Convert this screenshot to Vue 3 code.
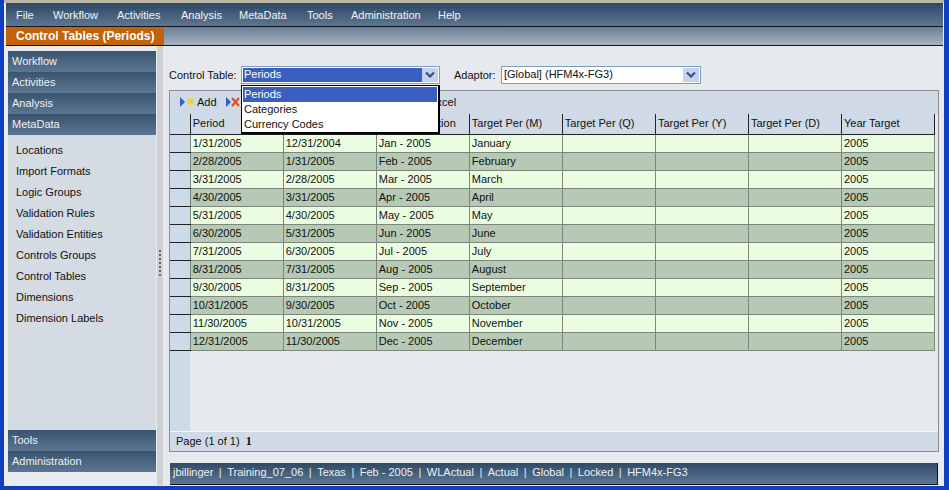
<template>
  <div class="window">
    <nav class="menubar">
      <span v-for="m in menus" :key="m.label" class="menu-item" :style="{ width: m.width + 'px' }">{{ m.label }}</span>
    </nav>
    <div class="titlebar">
      <div class="title-tab">Control Tables (Periods)</div>
    </div>

    <div class="body">
      <aside class="sidebar">
        <div class="side-head" v-for="h in topHeads" :key="h">{{ h }}</div>
        <ul class="side-list">
          <li v-for="l in links" :key="l">{{ l }}</li>
        </ul>
        <div class="side-head" v-for="h in bottomHeads" :key="h">{{ h }}</div>
      </aside>

      <div class="splitter"><span class="grip"></span></div>

      <main class="content">
        <div class="filters">
          <label class="lbl">Control Table:</label>
          <div class="combo combo-open">
            <span class="combo-text">Periods</span>
            <span class="combo-btn">
              <svg width="10" height="8" viewBox="0 0 10 8"><path d="M1 1.5 L5 5.5 L9 1.5" fill="none" stroke="#3c4f7c" stroke-width="2.2"/></svg>
            </span>
            <ul class="dropdown">
              <li class="sel">Periods</li>
              <li>Categories</li>
              <li>Currency Codes</li>
            </ul>
          </div>
          <label class="lbl lbl-adaptor">Adaptor:</label>
          <div class="combo combo-wide">
            <span class="combo-text plain">[Global] (HFM4x-FG3)</span>
            <span class="combo-btn">
              <svg width="10" height="8" viewBox="0 0 10 8"><path d="M1 1.5 L5 5.5 L9 1.5" fill="none" stroke="#3c4f7c" stroke-width="2.2"/></svg>
            </span>
          </div>
        </div>

        <section class="grid">
          <div class="toolbar">
            <span class="tool">
              <svg width="16" height="12" viewBox="0 0 16 12">
                <path d="M1 1 L6 6 L1 11 Z" fill="#2f5fd0"/>
                <path d="M11.5 1.5 V9.5 M7.5 5.5 H15.5 M8.7 2.7 L14.3 8.3 M14.3 2.7 L8.7 8.3" stroke="#e6d63c" stroke-width="1.6"/>
              </svg>
              Add
            </span>
            <span class="tool tool-del">
              <svg width="16" height="12" viewBox="0 0 16 12">
                <path d="M1 1 L6 6 L1 11 Z" fill="#2f5fd0"/>
                <path d="M7 2 L14 10 M14 2 L7 10" stroke="#e0502a" stroke-width="2.2"/>
              </svg>
            </span>
            <span class="tool tool-excel">xcel</span>
          </div>

          <table class="tbl">
            <thead>
              <tr>
                <th class="rowhead"></th>
                <th v-for="(c, i) in columns" :key="i">{{ c }}</th>
              </tr>
            </thead>
            <tbody>
              <tr v-for="(r, i) in rows" :key="r.period" :class="i % 2 ? 'dark' : 'light'">
                <td class="rowhead"></td>
                <td>{{ r.period }}</td>
                <td>{{ r.prior }}</td>
                <td>{{ r.desc }}</td>
                <td>{{ r.month }}</td>
                <td></td>
                <td></td>
                <td></td>
                <td>2005</td>
              </tr>
            </tbody>
          </table>

          <div class="grid-space"><span class="rowhead-fill"></span></div>
          <div class="pager">Page (1 of 1)&nbsp; <b>1</b></div>
        </section>

        <footer class="status">
          <template v-for="(s, i) in statusItems" :key="s">
            <span v-if="i" class="sep">|</span>
            <span>{{ s }}</span>
          </template>
        </footer>
      </main>
    </div>
  </div>
</template>

<script setup>
const menus = [
  { label: 'File', width: 37 },
  { label: 'Workflow', width: 64 },
  { label: 'Activities', width: 64 },
  { label: 'Analysis', width: 58 },
  { label: 'MetaData', width: 68 },
  { label: 'Tools', width: 44 },
  { label: 'Administration', width: 87 },
  { label: 'Help', width: 40 }
]

const topHeads = ['Workflow', 'Activities', 'Analysis', 'MetaData']
const bottomHeads = ['Tools', 'Administration']
const links = [
  'Locations', 'Import Formats', 'Logic Groups', 'Validation Rules', 'Validation Entities',
  'Controls Groups', 'Control Tables', 'Dimensions', 'Dimension Labels'
]

// the second header and most of the third sit under the open dropdown
const columns = [
  'Period', '', 'tion', 'Target Per (M)',
  'Target Per (Q)', 'Target Per (Y)', 'Target Per (D)', 'Year Target'
]

const rows = [
  ['1/31/2005', '12/31/2004', 'Jan - 2005', 'January'],
  ['2/28/2005', '1/31/2005', 'Feb - 2005', 'February'],
  ['3/31/2005', '2/28/2005', 'Mar - 2005', 'March'],
  ['4/30/2005', '3/31/2005', 'Apr - 2005', 'April'],
  ['5/31/2005', '4/30/2005', 'May - 2005', 'May'],
  ['6/30/2005', '5/31/2005', 'Jun - 2005', 'June'],
  ['7/31/2005', '6/30/2005', 'Jul - 2005', 'July'],
  ['8/31/2005', '7/31/2005', 'Aug - 2005', 'August'],
  ['9/30/2005', '8/31/2005', 'Sep - 2005', 'September'],
  ['10/31/2005', '9/30/2005', 'Oct - 2005', 'October'],
  ['11/30/2005', '10/31/2005', 'Nov - 2005', 'November'],
  ['12/31/2005', '11/30/2005', 'Dec - 2005', 'December']
].map(([period, prior, desc, month]) => ({ period, prior, desc, month }))

const statusItems = ['jbillinger', 'Training_07_06', 'Texas', 'Feb - 2005', 'WLActual', 'Actual', 'Global', 'Locked', 'HFM4x-FG3']
</script>

<style>
html, body {
  margin: 0;
  overflow: hidden;
}
</style>

<style scoped>
.window {
  width: 949px;
  height: 490px;
  box-sizing: border-box;
  padding: 3px 5px 5px 6px;
  background: #e9ecef;
  font-family: "Liberation Sans", Arial, sans-serif;
  font-size: 11px;
  color: #111;
  display: flex;
  flex-direction: column;
  box-shadow: inset 4px 0 0 #0f3ec0, inset -5px 0 0 #0f3ec0, inset 0 -4px 0 #0f3ec0, inset 0 3px 0 #bdb8a4;
}

.menubar {
  height: 23px;
  margin-right: 1px;
  padding-left: 10px;
  display: flex;
  align-items: center;
  background: linear-gradient(#2c4663, #5d7793);
  color: #f2f4f6;
  font-size: 11px;
  flex: none;
}

.titlebar {
  height: 18px;
  margin-right: 1px;
  border-top: 1px solid #10161d;
  border-bottom: 1px solid #10161d;
  background: linear-gradient(#6c7f96, #a6b1c1);
  flex: none;
  display: flex;
}

.title-tab {
  width: 158px;
  background: #c2620a;
  color: #fff;
  font-weight: bold;
  font-size: 12px;
  line-height: 18px;
  padding-left: 10px;
  box-sizing: border-box;
}

.body {
  flex: 1;
  display: flex;
  min-height: 0;
}

.sidebar {
  width: 148px;
  margin: 5px 0 0 2px;
  height: 421px;
  flex: none;
  display: flex;
  flex-direction: column;
}

.side-head {
  height: 21px;
  line-height: 21px;
  padding-left: 4px;
  color: #eef1f4;
  background: linear-gradient(#3a536e, #5c7590);
  flex: none;
}

.side-list {
  flex: 1;
  margin: 0;
  padding: 5px 0 0 8px;
  list-style: none;
  background: #d4dbe2;
}

.side-list li {
  height: 21px;
  line-height: 21px;
}

.splitter {
  width: 6px;
  margin-left: 1px;
  background: #cfd0d0;
  flex: none;
  display: flex;
  align-items: center;
  justify-content: center;
  padding-bottom: 3px;
}

.grip {
  width: 2px;
  height: 28px;
  background: repeating-linear-gradient(#666 0 2px, transparent 2px 4px);
}

.content {
  flex: 1;
  min-width: 0;
  padding: 20px 0 0 6px;
  display: flex;
  flex-direction: column;
  background: #e6e9ed;
}

.filters {
  display: flex;
  align-items: center;
  height: 18px;
  flex: none;
}

.lbl {
  width: 72px;
  padding-bottom: 1px;
  flex: none;
}

.lbl-adaptor {
  width: 47px;
  margin-left: 14px;
}

.combo {
  position: relative;
  width: 199px;
  height: 18px;
  box-sizing: border-box;
  border: 1px solid #7f9db9;
  background: #fff;
  display: flex;
  padding: 1px;
}

.combo-wide {
  width: 200px;
}

.combo-text {
  flex: 1;
  line-height: 13px;
  padding-left: 1px;
  color: #fff;
  background: #3a5fc0;
}

.combo-text.plain {
  color: #111;
  background: #fff;
}

.combo-btn {
  width: 16px;
  background: #c4d2ef;
  display: flex;
  align-items: center;
  justify-content: center;
}

.dropdown {
  position: absolute;
  left: -1px;
  top: 18px;
  width: 199px;
  height: 49px;
  box-sizing: border-box;
  margin: 0;
  padding: 1px;
  list-style: none;
  background: #fff;
  border: 1px solid #000;
  border-right-width: 2px;
  border-bottom-width: 2px;
  z-index: 5;
}

.dropdown li {
  height: 15px;
  line-height: 14px;
  padding-left: 1px;
}

.dropdown li.sel {
  background: #3a5fc0;
  color: #fff;
}

.grid {
  margin-top: 6px;
  width: 770px;
  height: 362px;
  box-sizing: border-box;
  border: 1px solid #8a8d90;
  display: flex;
  flex-direction: column;
  flex: none;
}

.toolbar {
  height: 23px;
  padding: 0 0 2px 9px;
  box-sizing: border-box;
  display: flex;
  align-items: center;
  background: #cfdae6;
  flex: none;
}

.tool {
  display: inline-flex;
  align-items: center;
  gap: 2px;
}

.tool-del {
  margin-left: 8px;
}

/* only the end of this label clears the dropdown */
.tool-excel {
  margin-left: 196px;
}

.tbl {
  border-collapse: collapse;
  table-layout: fixed;
  width: 765px;
  flex: none;
}

.tbl th,
.tbl td {
  width: 92px;
  height: 18px;
  padding: 0 0 0 2px;
  box-sizing: border-box;
  text-align: left;
  font-weight: normal;
  white-space: nowrap;
  overflow: hidden;
  border-right: 1px solid #7d857c;
  border-bottom: 1px solid #7d857c;
}

.tbl th {
  height: 20px;
  padding-bottom: 2px;
  background: #cfdae6;
  border-right: 1px solid #222;
  border-bottom: 1px solid #222;
}

.tbl th:nth-child(4) {
  text-align: right;
  padding-right: 13px;
}

.tbl .rowhead {
  width: 20px;
  padding: 0;
  background: #cddbe9;
  border-right: 1px solid #7d857c;
  border-bottom: 1px solid #222;
}

.tbl th.rowhead {
  border-right: 1px solid #222;
}

.light td {
  background: #ebfde1;
}

.dark td {
  background: #b6c9b4;
}

.grid-space {
  flex: 1;
  display: flex;
  background: #e6e9ed;
}

.rowhead-fill {
  width: 20px;
  background: #cddbe9;
}

.pager {
  height: 19px;
  line-height: 19px;
  padding-left: 6px;
  background: #cfdae6;
  border-top: 1px solid #f4f6f8;
  flex: none;
}

.pager b {
  font-family: "Liberation Serif", serif;
  font-size: 12px;
}

.status {
  margin-top: 11px;
  margin-left: 1px;
  width: 768px;
  height: 22px;
  box-sizing: border-box;
  padding: 0 0 3px 3px;
  display: flex;
  align-items: center;
  gap: 5.5px;
  color: #eef1f4;
  background: linear-gradient(#2f4a66, #5d7793);
  border-right: 1px solid #111;
  border-bottom: 1px solid #111;
  flex: none;
}

.sep {
  color: #e8ebee;
}
</style>
